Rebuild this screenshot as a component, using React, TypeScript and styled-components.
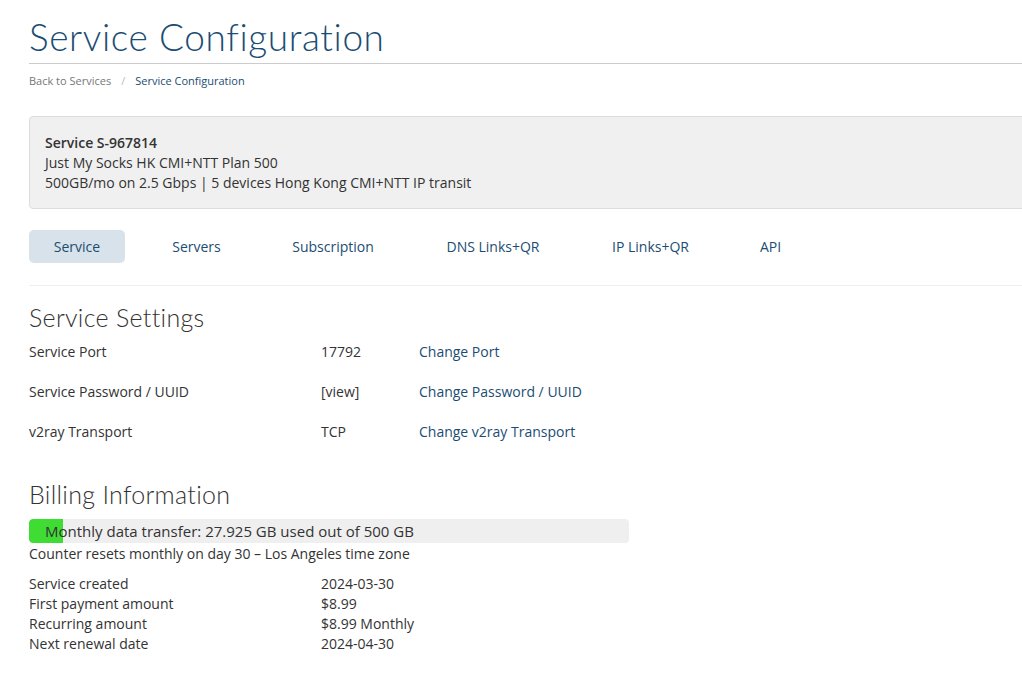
import React from "react";
import styled, { createGlobalStyle } from "styled-components";

const Global = createGlobalStyle`
  html, body { margin: 0; padding: 0; background: #fff; overflow-x: hidden; }
  body { font-family: "Open Sans", "Noto Sans", sans-serif; font-size: 14px; color: #333; }
`;

const Page = styled.div`
  padding: 0 0 30px 29px;
  margin-right: -30px;
`;

const Title = styled.h1`
  font-family: "Lato", "Open Sans", sans-serif;
  font-weight: 300;
  font-size: 37px;
  letter-spacing: 0.6px;
  color: #1b4d72;
  margin: 0;
  padding-top: 14px;
  line-height: 46px;
  padding-bottom: 3px;
  border-bottom: 1px solid #ccc;
`;

const Crumbs = styled.div`
  display: flex;
  gap: 8px;
  font-size: 11px;
  margin-top: 9px;
  line-height: 16px;
  color: #777;
`;

const CrumbSep = styled.span`
  color: #bbb;
  padding: 0 2px;
`;

const CrumbActive = styled.span`
  color: #1b4d72;
`;

const InfoBox = styled.div`
  margin-top: 27px;
  background: #f0f0f0;
  border: 1px solid #ddd;
  border-radius: 4px;
  padding: 16px 15px 15px;
  line-height: 20px;
  height: 60px;
`;

const Bold = styled.div`
  font-weight: 600;
`;

const Tabs = styled.nav`
  display: flex;
  margin-top: 21px;
  padding-bottom: 22px;
  border-bottom: 1px solid #eee;
`;

const Tab = styled.div<{ $active?: boolean; $w: number }>`
  width: ${(p) => p.$w}px;
  height: 33px;
  display: flex;
  align-items: center;
  justify-content: center;
  border-radius: 5px;
  color: #1b4d72;
  background: ${(p) => (p.$active ? "#d8e2ea" : "transparent")};
`;

const H2 = styled.h2<{ $mt: number }>`
  font-family: "Lato", "Open Sans", sans-serif;
  font-weight: 300;
  font-size: 25px;
  letter-spacing: 0.3px;
  color: #333;
  margin: ${(p) => p.$mt}px 0 0;
  line-height: 30px;
`;

const SettingsList = styled.div`
  margin-top: 10px;
`;

const SettingRow = styled.div`
  display: grid;
  grid-template-columns: 292px 98px auto;
  height: 40px;
  line-height: 20px;
`;

const Link = styled.a`
  color: #1b4d72;
  text-decoration: none;
`;

const Progress = styled.div`
  position: relative;
  width: 600px;
  height: 24px;
  background: #efefef;
  border-radius: 4px;
  margin-top: 10px;
  overflow: hidden;
  font-size: 15px;
`;

const ProgressFill = styled.div`
  position: absolute;
  left: 0;
  top: 0;
  bottom: 0;
  background: #3fdd33;
  border-radius: 4px 0 0 4px;
`;

const ProgressText = styled.span`
  position: relative;
  line-height: 24px;
  padding-left: 16px;
  color: #333;
`;

const Note = styled.div`
  line-height: 20px;
  margin-top: 1px;
  margin-bottom: 10px;
`;

const BillRow = styled.div`
  display: grid;
  grid-template-columns: 292px auto;
  line-height: 20px;
`;

const tabs: [string, number][] = [
  ["Service", 96],
  ["Servers", 143],
  ["Subscription", 130],
  ["DNS Links+QR", 190],
  ["IP Links+QR", 125],
  ["API", 115],
];

export default function App() {
  const used = 27.925;
  const total = 500;
  return (
    <Page>
      <Global />
      <Title>Service Configuration</Title>
      <Crumbs>
        <span>Back to Services</span>
        <CrumbSep>/</CrumbSep>
        <CrumbActive>Service Configuration</CrumbActive>
      </Crumbs>
      <InfoBox>
        <Bold>Service S-967814</Bold>
        <div>Just My Socks HK CMI+NTT Plan 500</div>
        <div>500GB/mo on 2.5 Gbps | 5 devices Hong Kong CMI+NTT IP transit</div>
      </InfoBox>
      <Tabs>
        {tabs.map(([t, w], i) => (
          <Tab key={t} $w={w} $active={i === 0}>
            {t}
          </Tab>
        ))}
      </Tabs>
      <H2 $mt={16}>Service Settings</H2>
      <SettingsList>
        <SettingRow>
          <span>Service Port</span>
          <span>17792</span>
          <Link>Change Port</Link>
        </SettingRow>
        <SettingRow>
          <span>Service Password / UUID</span>
          <span>[view]</span>
          <Link>Change Password / UUID</Link>
        </SettingRow>
        <SettingRow>
          <span>v2ray Transport</span>
          <span>TCP</span>
          <Link>Change v2ray Transport</Link>
        </SettingRow>
      </SettingsList>
      <H2 $mt={17}>Billing Information</H2>
      <Progress>
        <ProgressFill style={{ width: `${(used / total) * 100}%` }} />
        <ProgressText>Monthly data transfer: 27.925 GB used out of 500 GB</ProgressText>
      </Progress>
      <Note>Counter resets monthly on day 30 – Los Angeles time zone</Note>
      <BillRow><span>Service created</span><span>2024-03-30</span></BillRow>
      <BillRow><span>First payment amount</span><span>$8.99</span></BillRow>
      <BillRow><span>Recurring amount</span><span>$8.99 Monthly</span></BillRow>
      <BillRow><span>Next renewal date</span><span>2024-04-30</span></BillRow>
    </Page>
  );
}
